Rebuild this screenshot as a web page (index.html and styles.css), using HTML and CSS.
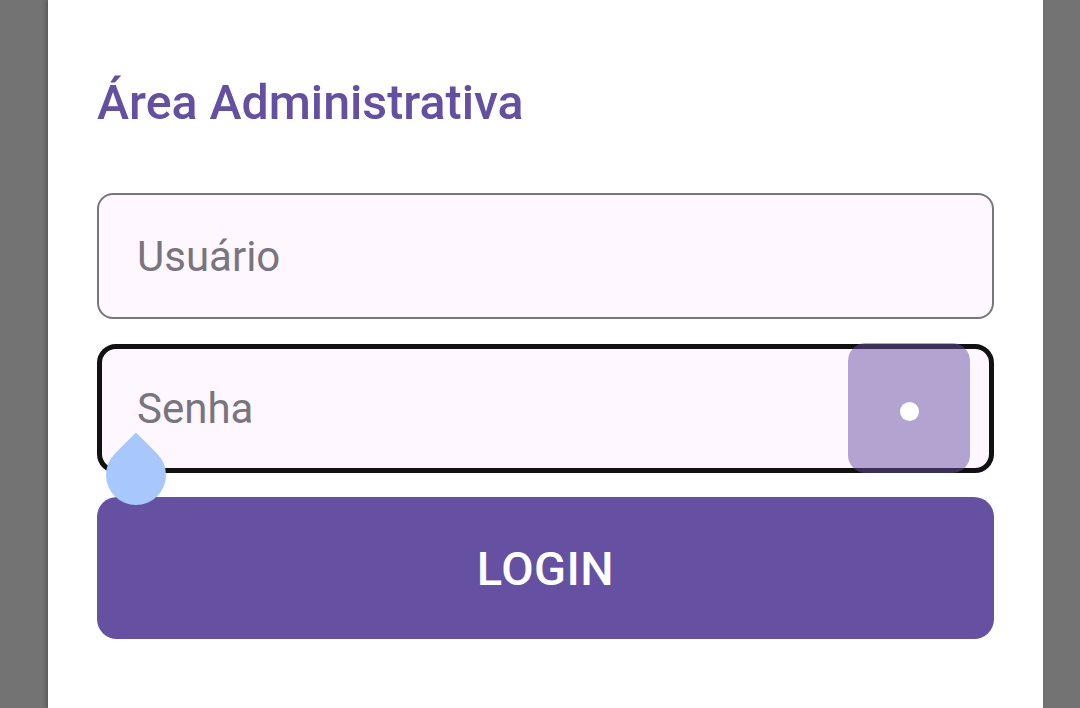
FILE: index.html
```html
<!DOCTYPE html>
<html lang="pt">
<head>
<meta charset="utf-8">
<title>Área Administrativa</title>
<link rel="stylesheet" href="styles.css">
</head>
<body>
<div class="screen">
  <main class="card">
    <h1 class="title">Área Administrativa</h1>
    <form class="form">
      <label class="field">
        <input class="field-input" type="text" placeholder="Usuário">
      </label>
      <label class="field field-focused">
        <input class="field-input" type="password" placeholder="Senha">
        <span class="key-overlay"><span class="key-dot"></span></span>
        <span class="cursor-handle"></span>
      </label>
      <button class="login-btn" type="button">LOGIN</button>
    </form>
  </main>
</div>
</body>
</html>
```

FILE: styles.css
```css
* { box-sizing: border-box; }
html, body { margin: 0; padding: 0; }
body {
  background: #737373;
  font-family: Roboto, "Noto Sans", sans-serif;
  width: 1080px;
  height: 708px;
  overflow: hidden;
}
.screen {
  display: flex;
  height: 708px;
  padding-left: 48px;
}
.card {
  width: 995px;
  height: 708px;
  background: #ffffff;
  padding: 73px 49px 0 49px;
  box-shadow: -2px 0 4px rgba(0,0,0,0.25);
}
.title {
  margin: 0;
  font-size: 48.3px;
  line-height: 60px;
  font-weight: 500;
  color: #654FA1;
}
.form {
  display: flex;
  flex-direction: column;
  margin-top: 60px;
}
.field {
  position: relative;
  display: flex;
  align-items: center;
  height: 126px;
  border: 2px solid #79747E;
  border-radius: 16px;
  background: #FEF7FF;
  padding: 0 38px;
}
.field + .field { margin-top: 25px; }
.field-focused {
  border: 5px solid #111111;
  border-radius: 19px;
  height: 129px;
  padding: 0 35px;
}
.field-input {
  border: 0;
  outline: 0;
  background: transparent;
  width: 100%;
  font-family: Roboto, sans-serif;
  font-size: 42px;
  color: #1D1B20;
  padding: 0;
}
.field-input::placeholder { color: #79747E; }
.key-overlay {
  position: absolute;
  right: 19px;
  top: -6px;
  width: 122px;
  height: 130px;
  border-radius: 18px;
  background: rgba(103, 80, 164, 0.5);
  display: flex;
  align-items: center;
  justify-content: center;
}
.key-dot {
  width: 19px;
  height: 19px;
  border-radius: 50%;
  background: #ffffff;
  transform: translateY(3px);
}
.cursor-handle {
  position: absolute;
  left: 4px;
  top: 96px;
  width: 60px;
  height: 60px;
  background: #A8C7FA;
  border-radius: 0 50% 50% 50%;
  transform: rotate(45deg);
  z-index: 2;
}
.login-btn {
  margin-top: 24px;
  height: 142px;
  border: 0;
  border-radius: 20px;
  background: #6550A2;
  color: #ffffff;
  font-family: Roboto, sans-serif;
  font-size: 47px;
  font-weight: 500;
  letter-spacing: 0.5px;
}
```
